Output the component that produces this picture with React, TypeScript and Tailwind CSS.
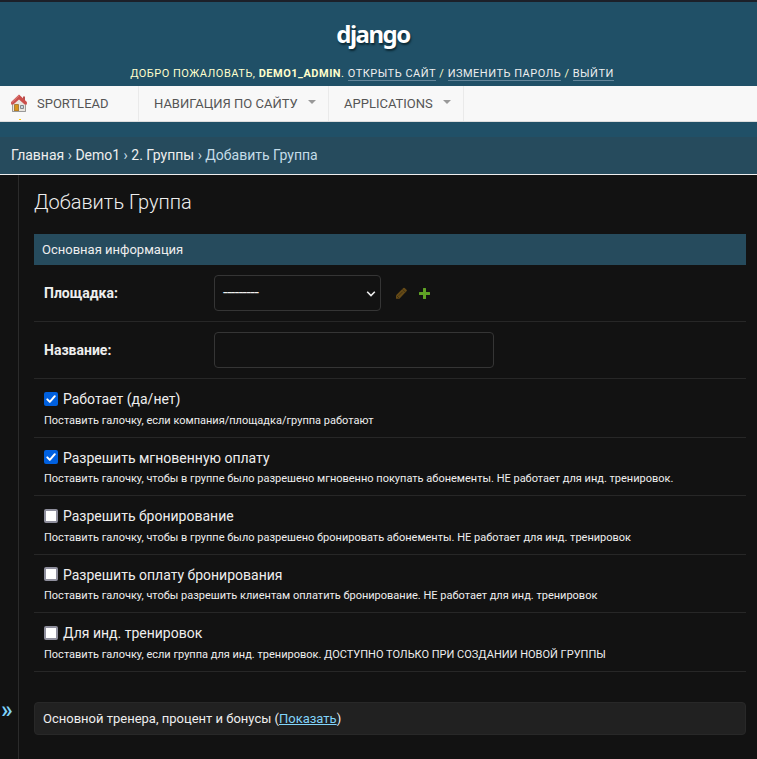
import React, { useState } from 'react';

interface CheckboxField {
  name: string;
  label: string;
  help: string;
  checked: boolean;
  rowClass: string;
  boxClass: string;
  helpClass: string;
}

const checkboxFields: CheckboxField[] = [
  {
    name: 'is_active',
    label: 'Работает (да/нет)',
    help: 'Поставить галочку, если компания/площадка/группа работают',
    checked: true,
    rowClass: 'h-[59px]',
    boxClass: '',
    helpClass: 'mt-1',
  },
  {
    name: 'instant_payment',
    label: 'Разрешить мгновенную оплату',
    help: 'Поставить галочку, чтобы в группе было разрешено мгновенно покупать абонементы. НЕ работает для инд. тренировок.',
    checked: true,
    rowClass: 'h-[58px]',
    boxClass: 'mb-0.5',
    helpClass: 'mt-[3px]',
  },
  {
    name: 'booking',
    label: 'Разрешить бронирование',
    help: 'Поставить галочку, чтобы в группе было разрешено бронировать абонементы. НЕ работает для инд. тренировок',
    checked: false,
    rowClass: 'h-[59px]',
    boxClass: '',
    helpClass: 'mt-1',
  },
  {
    name: 'booking_payment',
    label: 'Разрешить оплату бронирования',
    help: 'Поставить галочку, чтобы разрешить клиентам оплатить бронирование. НЕ работает для инд. тренировок',
    checked: false,
    rowClass: 'h-[58px]',
    boxClass: 'mb-0.5',
    helpClass: 'mt-[3px]',
  },
  {
    name: 'individual',
    label: 'Для инд. тренировок',
    help: 'Поставить галочку, если группа для инд. тренировок. ДОСТУПНО ТОЛЬКО ПРИ СОЗДАНИИ НОВОЙ ГРУППЫ',
    checked: false,
    rowClass: 'h-[59px]',
    boxClass: '',
    helpClass: 'mt-1',
  },
];

function HomeIcon() {
  return (
    <svg width="16" height="18" viewBox="0 0 16 18" className="mb-0.5 shrink-0">
      <path d="M1.500 9.500 8 4l6.500 5.500v8h-13z" fill="#e8e5df" stroke="#9d9a94" strokeWidth="1" />
      <path d="M12 2.500h2V7h-2z" fill="#b9504e" />
      <path d="M8 .4.100 8v2.600h2.200L8 5.400l5.700 5.200h2.200V8z" fill="#cb4f4c" />
      <path d="M8 1.700 1.200 8.300" stroke="#e08a85" strokeWidth="1" />
      <path d="M3.500 10.500h4V17h-4z" fill="#d9941c" stroke="#8f6420" strokeWidth=".7" />
      <path d="M9.500 11.500h3v3h-3z" fill="#c6d7e2" stroke="#82878c" strokeWidth="1" />
      <path d="M1.500 17.500h13" stroke="#999" strokeWidth="1" />
    </svg>
  );
}

function PencilIcon() {
  return (
    <svg width="12" height="12" viewBox="0 0 12 12">
      <path d="M1 11.800V8.300L8.300 1q.7-.7 1.400 0l1.800 1.800q.7.700 0 1.400L4.400 11.800z" fill="#654a17" />
      <path d="M7.500 2.300 10.200 5M1.600 8.600 4 11M3.600 8.800l4.200-4.200" stroke="#33260d" strokeWidth=".7" />
    </svg>
  );
}

function PlusIcon() {
  return (
    <svg width="11" height="11" viewBox="0 0 11 11">
      <path
        d="M4.500 0h2q.5 0 .5.500V4h3.500q.5 0 .5.500v2q0 .5-.5.500H7v3.500q0 .5-.5.500h-2q-.5 0-.5-.5V7H.5Q0 7 0 6.500v-2Q0 4 .5 4H4V.5q0-.5.500-.5z"
        fill="#5fa225"
      />
    </svg>
  );
}

function Checkbox({ name, defaultChecked }: { name: string; defaultChecked: boolean }) {
  const [checked, setChecked] = useState(defaultChecked);

  return (
    <button
      type="button"
      id={name}
      role="checkbox"
      aria-checked={checked}
      onClick={() => setChecked(!checked)}
      className={
        checked
          ? 'flex size-3.5 shrink-0 items-center justify-center rounded-[2px] bg-[#0060df]'
          : 'block size-3.5 shrink-0 rounded-[2px] border-2 border-[#8f8f9d] bg-white'
      }
    >
      {checked && (
        <svg width="14" height="14" viewBox="0 0 14 14" fill="none">
          <path d="m3.300 7.400 2.500 2.500 5-5.700" stroke="#fff" strokeWidth="2" strokeLinecap="round" strokeLinejoin="round" />
        </svg>
      )}
    </button>
  );
}

function Header() {
  const linkClass = 'border-b border-[#63859a] text-[#eee]';

  return (
    <header className="flex h-[86px] flex-col items-center border-t-2 border-[#1c2029] bg-[#205067]">
      <h1 className="mt-[14px] ml-[-11px] h-9 font-['Noto_Sans'] text-[24px] leading-9 font-bold tracking-[-1.5px] text-white [text-shadow:1px_2px_2px_#0a2733]">
        django
      </h1>
      <div className="mt-[14px] ml-[-13px] flex h-[15px] text-[11px] leading-[15px] tracking-[0.5px] whitespace-pre text-[#ffffcc] uppercase">
        <span>Добро пожаловать, </span>
        <strong className="font-bold">demo1_admin</strong>
        <span>. </span>
        <a href="#" className={linkClass}>Открыть сайт</a>
        <span> / </span>
        <a href="#" className={linkClass}>Изменить пароль</a>
        <span> / </span>
        <a href="#" className={linkClass}>Выйти</a>
      </div>
    </header>
  );
}

function Caret() {
  return (
    <svg width="8" height="4" viewBox="0 0 8 4" className="mb-[3px]">
      <path d="M0 0h8L4 4z" fill="#999" />
    </svg>
  );
}

function NavBar() {
  return (
    <nav className="flex h-9 items-stretch border-b border-[#ddd] bg-[#f8f8f8] text-[13px] text-[#555] uppercase">
      <a href="#" className="flex w-[139px] items-center border-r border-[#eaeaea] pl-[11px]">
        <span className="relative mr-[10px] flex">
          <HomeIcon />
          <span className="absolute top-[25px] left-2 h-px w-0.5 bg-[#fc0]" />
        </span>
        Sportlead
      </a>
      <a href="#" className="flex w-[190px] items-center justify-between border-r border-[#eaeaea] pr-3 pl-[15px]">
        Навигация по сайту
        <Caret />
      </a>
      <a href="#" className="flex w-[135px] items-center justify-between border-r border-[#eaeaea] pr-3 pl-[15px]">
        Applications
        <Caret />
      </a>
    </nav>
  );
}

export default function App() {
  return (
    <div className="flex h-[759px] w-[757px] flex-col overflow-hidden bg-[#121212] font-[Roboto,'Liberation_Sans',sans-serif] text-[#eee]">
      <Header />
      <NavBar />
      <div className="h-[15px] shrink-0 bg-[#205067]" />
      <div className="flex h-[38px] shrink-0 items-center border-b border-[#eee] bg-[#264b5d] pl-[11px] text-[14px] whitespace-pre text-[#c4dce8]">
        <a href="#" className="text-[#eee]">Главная</a> › <a href="#" className="text-[#eee]">Demo1</a> ›{' '}
        <a href="#" className="text-[#eee]">2. Группы</a> › Добавить Группа
      </div>

      <div className="flex min-h-0 flex-1">
        <button
          type="button"
          className="flex w-[19px] shrink-0 items-end border-r border-[#2b2b2b] pb-[37px] pl-px text-[24px] leading-6 font-medium text-[#81d4fa]"
        >
          »
        </button>

        <main className="flex-1 pr-[11px] pl-[15px]">
          <h2 className="mt-[15px] h-6 text-[20px] leading-6 font-light">Добавить Группа</h2>

          <fieldset className="mt-5">
            <h3 className="flex h-[31px] items-center bg-[#264b5d] px-2 text-[13px]">Основная информация</h3>

            <div className="flex h-[57px] items-center border-b border-[#272727] pl-[10px]">
              <label className="w-[170px] text-[14px] font-bold">Площадка:</label>
              <div className="flex h-9 w-[167px] items-center justify-between rounded border border-[#353535] pr-1 pl-2 text-[16px]">
                <span className="tracking-[-0.500px]">---------</span>
                <svg width="10" height="6" viewBox="0 0 10 6" className="mt-0.5" fill="none">
                  <path d="m1.200.8 3.800 3.800L8.800.8" stroke="#eee" strokeWidth="1.600" />
                </svg>
              </div>
              <a href="#" className="ml-[14px]"><PencilIcon /></a>
              <a href="#" className="ml-3"><PlusIcon /></a>
            </div>

            <div className="flex h-[57px] items-center border-b border-[#272727] pl-[10px]">
              <label htmlFor="title" className="w-[170px] text-[14px] font-bold">Название:</label>
              <input id="title" type="text" className="h-9 w-[280px] rounded border border-[#353535] bg-[#121212] px-2" />
            </div>

            {checkboxFields.map((field) => (
              <div key={field.name} className={`${field.rowClass} border-b border-[#272727] pt-[10px] pl-[10px]`}>
                <div className="flex h-5 items-center">
                  <div className={field.boxClass}>
                    <Checkbox name={field.name} defaultChecked={field.checked} />
                  </div>
                  <label htmlFor={field.name} className="ml-[5px] text-[14px] leading-5">{field.label}</label>
                </div>
                <p className={`${field.helpClass} text-[11px] leading-4 whitespace-nowrap`}>{field.help}</p>
              </div>
            ))}
          </fieldset>

          <div className="mt-[30px] flex h-[33px] items-center rounded border border-[#282828] bg-[#212121] pl-2 text-[13px]">
            Основной тренера, процент и бонусы (<a href="#" className="text-[#81d4fa] underline">Показать</a>)
          </div>
        </main>
      </div>
    </div>
  );
}
